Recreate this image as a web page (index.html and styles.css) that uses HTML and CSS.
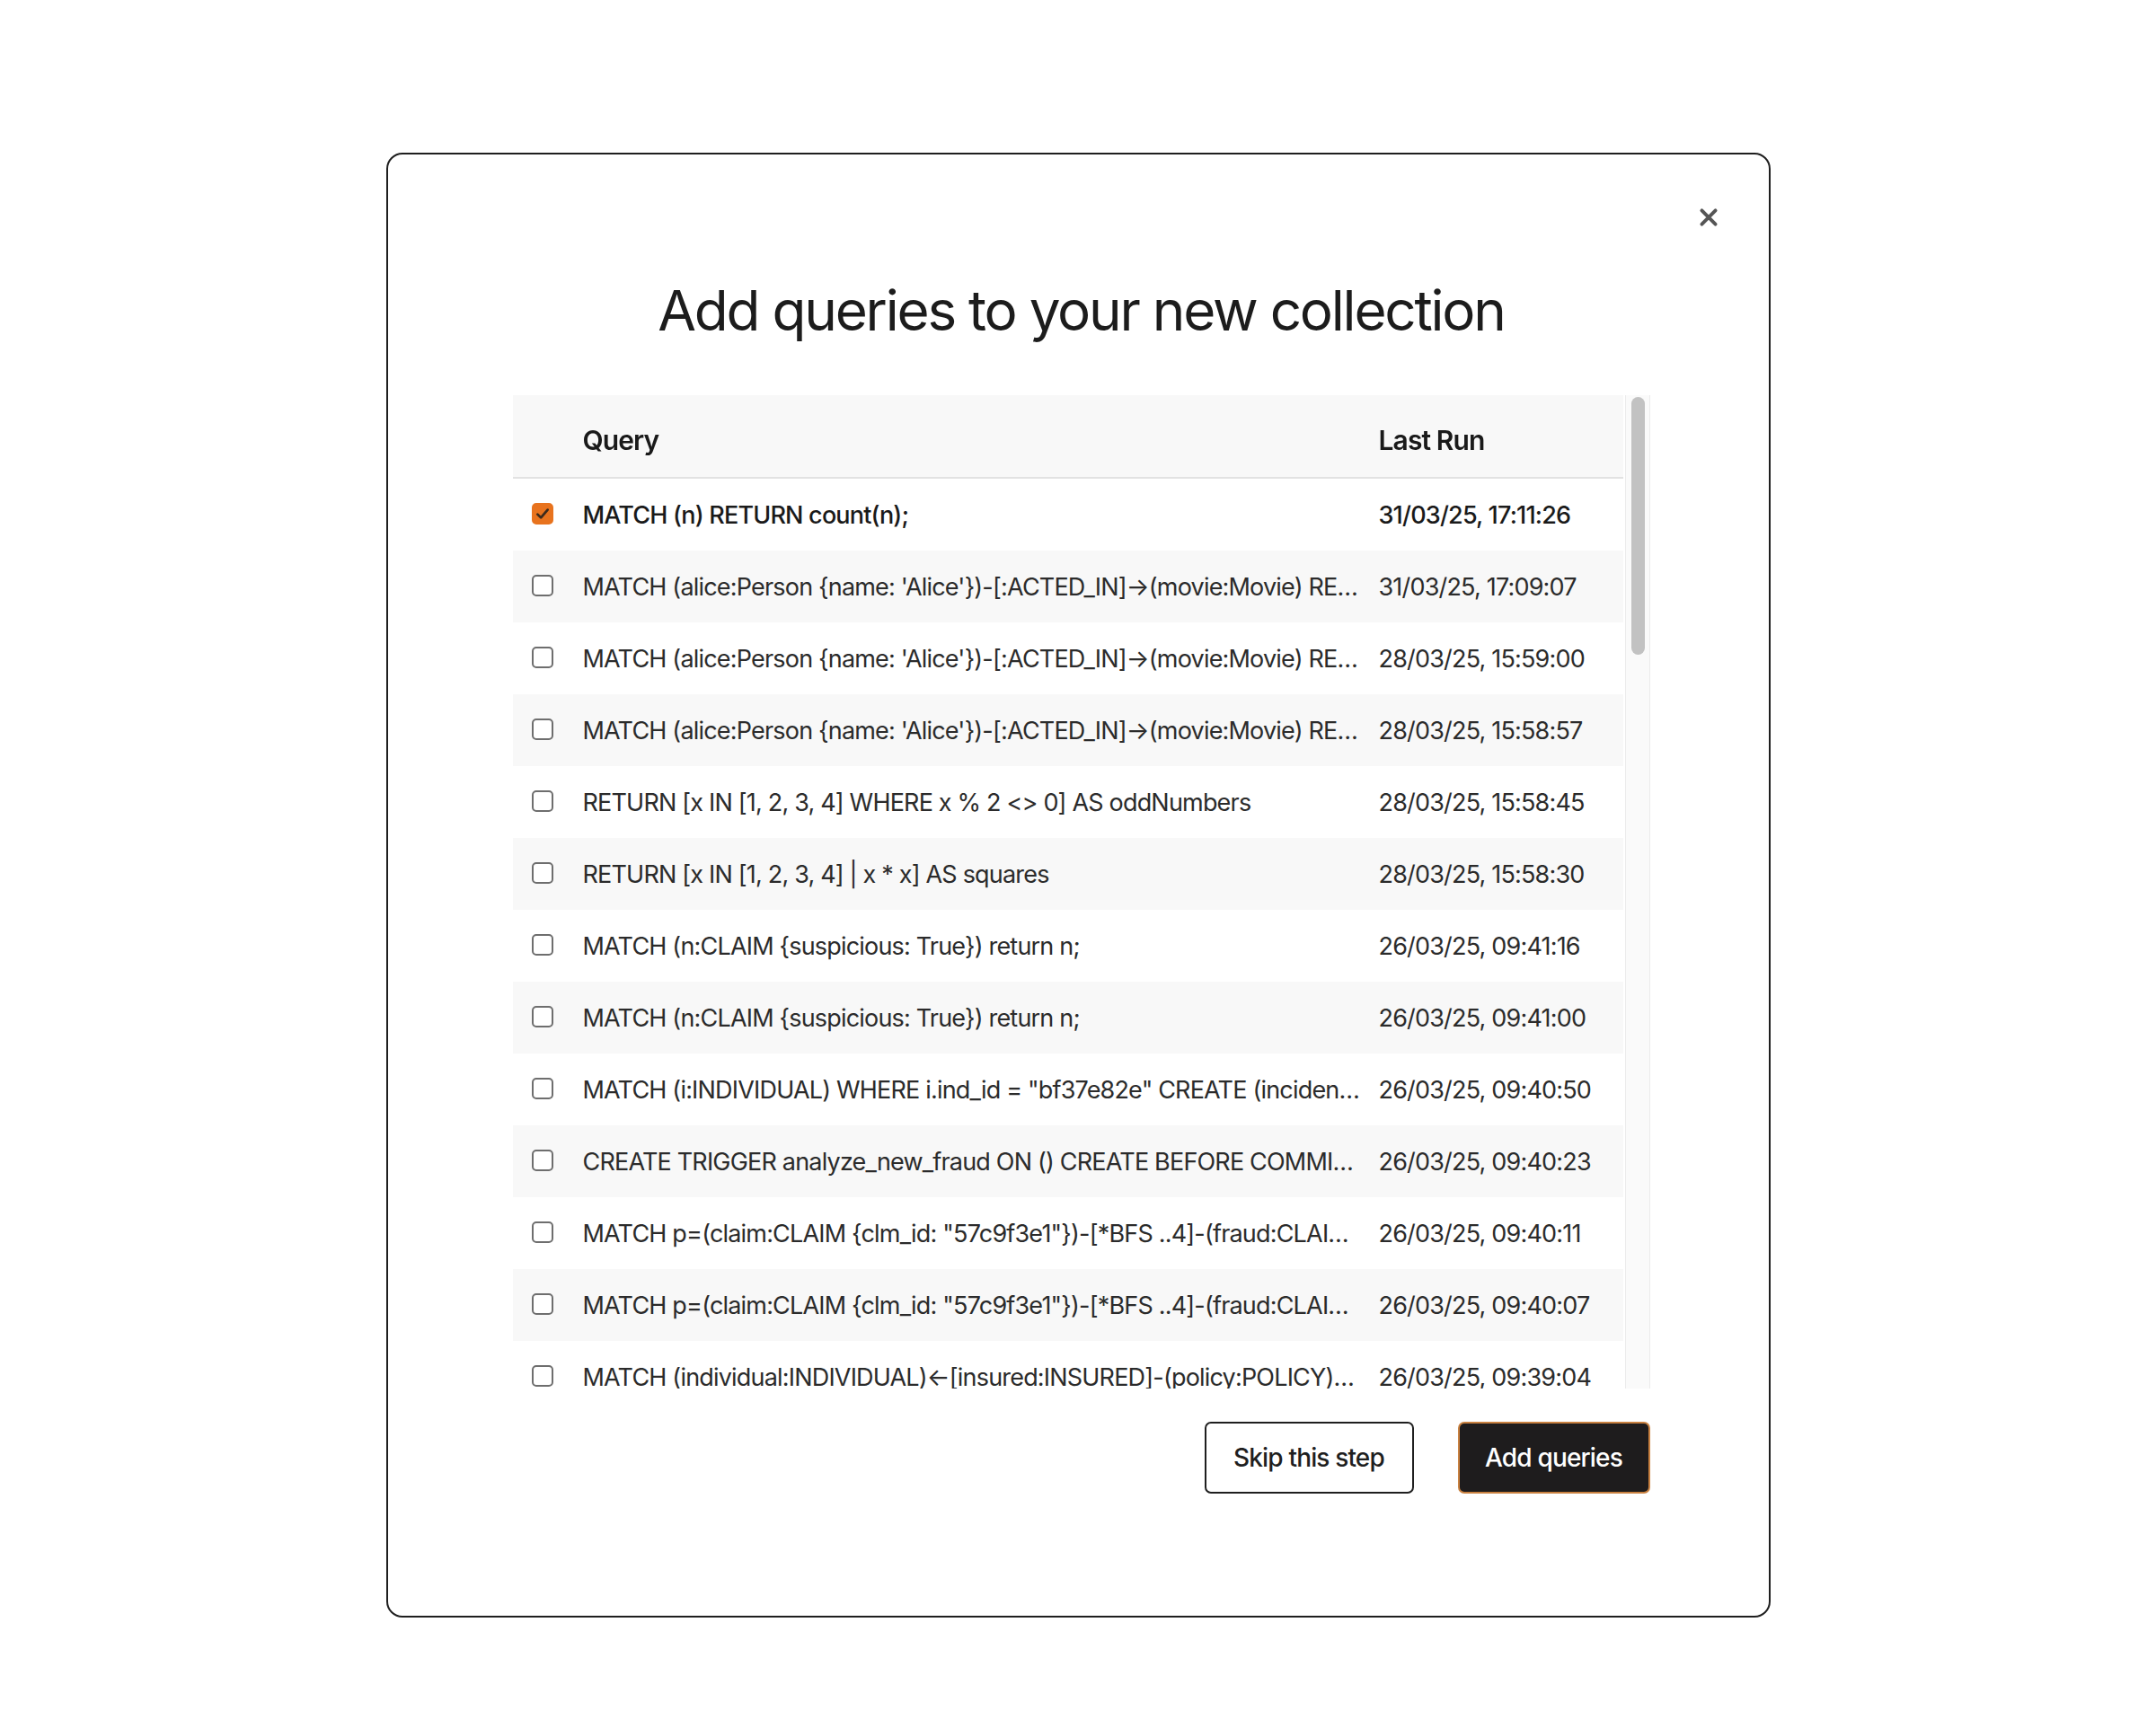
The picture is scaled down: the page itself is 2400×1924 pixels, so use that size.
FILE: index.html
```html
<!DOCTYPE html>
<html lang="en">
<head>
    <meta charset="UTF-8">
    <meta name="viewport" content="width=device-width, initial-scale=1.0">
    <title>Add queries to your new collection</title>
    <link rel="stylesheet" href="styles.css">
</head>
<body>
    <div class="modal">
        <button class="close-btn" type="button" aria-label="Close">
            <svg viewBox="0 0 24 24" width="26" height="26">
                <path d="M5 5 L19 19 M19 5 L5 19" stroke="#555" stroke-width="3.6" stroke-linecap="round" fill="none"/>
            </svg>
        </button>

        <h1 class="modal-title">Add queries to your new collection</h1>

        <div class="table-area">
            <div class="table-wrap" id="table-wrap">
                <table class="query-table">
                    <colgroup>
                        <col class="col-check">
                        <col class="col-query">
                        <col class="col-date">
                    </colgroup>
                    <thead>
                        <tr>
                            <th></th>
                            <th>Query</th>
                            <th>Last Run</th>
                        </tr>
                    </thead>
                    <tbody id="query-rows">
                        <tr class="selected">
                            <td><span class="check"><svg viewBox="0 0 16 16"><path d="M3.5 8.5 L6.5 11.5 L12.5 4.5" stroke="#3b2a1c" stroke-width="2.2" fill="none" stroke-linecap="round" stroke-linejoin="round"/></svg></span></td>
                            <td class="query">MATCH (n) RETURN count(n);</td>
                            <td class="date">31/03/25, 17:11:26</td>
                        </tr>
                        <tr>
                            <td><span class="check"></span></td>
                            <td class="query">MATCH (alice:Person {name: 'Alice'})-[:ACTED_IN]→(movie:Movie) RETURN movie.title;</td>
                            <td class="date">31/03/25, 17:09:07</td>
                        </tr>
                        <tr>
                            <td><span class="check"></span></td>
                            <td class="query">MATCH (alice:Person {name: 'Alice'})-[:ACTED_IN]→(movie:Movie) RETURN movie;</td>
                            <td class="date">28/03/25, 15:59:00</td>
                        </tr>
                        <tr>
                            <td><span class="check"></span></td>
                            <td class="query">MATCH (alice:Person {name: 'Alice'})-[:ACTED_IN]→(movie:Movie) RETURN alice, movie;</td>
                            <td class="date">28/03/25, 15:58:57</td>
                        </tr>
                        <tr>
                            <td><span class="check"></span></td>
                            <td class="query">RETURN [x IN [1, 2, 3, 4] WHERE x % 2 &lt;&gt; 0] AS oddNumbers</td>
                            <td class="date">28/03/25, 15:58:45</td>
                        </tr>
                        <tr>
                            <td><span class="check"></span></td>
                            <td class="query">RETURN [x IN [1, 2, 3, 4] | x * x] AS squares</td>
                            <td class="date">28/03/25, 15:58:30</td>
                        </tr>
                        <tr>
                            <td><span class="check"></span></td>
                            <td class="query">MATCH (n:CLAIM {suspicious: True}) return n;</td>
                            <td class="date">26/03/25, 09:41:16</td>
                        </tr>
                        <tr>
                            <td><span class="check"></span></td>
                            <td class="query">MATCH (n:CLAIM {suspicious: True}) return n;</td>
                            <td class="date">26/03/25, 09:41:00</td>
                        </tr>
                        <tr>
                            <td><span class="check"></span></td>
                            <td class="query">MATCH (i:INDIVIDUAL) WHERE i.ind_id = "bf37e82e" CREATE (incident:INCIDENT {inc_id: "9ad3e11b"})-[:INCIDENT_ON]→(i);</td>
                            <td class="date">26/03/25, 09:40:50</td>
                        </tr>
                        <tr>
                            <td><span class="check"></span></td>
                            <td class="query">CREATE TRIGGER analyze_new_fraud ON () CREATE BEFORE COMMIT EXECUTE CALL fraud.analyze();</td>
                            <td class="date">26/03/25, 09:40:23</td>
                        </tr>
                        <tr>
                            <td><span class="check"></span></td>
                            <td class="query">MATCH p=(claim:CLAIM {clm_id: "57c9f3e1"})-[*BFS ..4]-(fraud:CLAIM {fraud: True}) RETURN p;</td>
                            <td class="date">26/03/25, 09:40:11</td>
                        </tr>
                        <tr>
                            <td><span class="check"></span></td>
                            <td class="query">MATCH p=(claim:CLAIM {clm_id: "57c9f3e1"})-[*BFS ..4]-(fraud:CLAIM) RETURN p;</td>
                            <td class="date">26/03/25, 09:40:07</td>
                        </tr>
                        <tr>
                            <td><span class="check"></span></td>
                            <td class="query">MATCH (individual:INDIVIDUAL)←[insured:INSURED]-(policy:POLICY)←[:COVERS]-(claim:CLAIM) RETURN *;</td>
                            <td class="date">26/03/25, 09:39:04</td>
                        </tr>
                    </tbody>
                </table>
            </div>
            <div class="scroll-rail" id="scroll-rail">
                <div class="scroll-thumb" id="scroll-thumb"></div>
            </div>
        </div>

        <div class="actions">
            <button type="button" class="btn btn-outline">Skip this step</button>
            <button type="button" class="btn btn-primary">Add queries</button>
        </div>
    </div>

    <script>
        document.addEventListener('DOMContentLoaded', function() {
            const tbody = document.getElementById('query-rows');
            const wrap = document.getElementById('table-wrap');
            const rail = document.getElementById('scroll-rail');
            const thumb = document.getElementById('scroll-thumb');
            const checkSvg = '<svg viewBox="0 0 16 16"><path d="M3.5 8.5 L6.5 11.5 L12.5 4.5" stroke="#3b2a1c" stroke-width="2.2" fill="none" stroke-linecap="round" stroke-linejoin="round"/></svg>';

            // Older history entries (below the fold)
            const older = [
                'MATCH (n:CLAIM) RETURN n LIMIT 25;',
                'MATCH (p:POLICY)-[:HAS_CLAIM]→(c:CLAIM) RETURN p, c;',
                'MATCH (n) DETACH DELETE n;',
                'SHOW TRIGGERS;',
                'MATCH (i:INDIVIDUAL) RETURN count(i);'
            ];
            for (let i = 0; i < 39; i++) {
                const tr = document.createElement('tr');
                const min = String(38 - Math.floor(i / 2)).padStart(2, '0');
                const sec = String((i * 17) % 60).padStart(2, '0');
                tr.innerHTML = '<td><span class="check"></span></td>' +
                    '<td class="query"></td>' +
                    '<td class="date">25/03/25, 09:' + min + ':' + sec + '</td>';
                tr.querySelector('.query').textContent = older[i % older.length];
                tbody.appendChild(tr);
            }

            tbody.addEventListener('click', function(e) {
                const row = e.target.closest('tr');
                if (!row) return;
                row.classList.toggle('selected');
                row.querySelector('.check').innerHTML = row.classList.contains('selected') ? checkSvg : '';
            });

            // Custom scrollbar
            function updateThumb() {
                const track = rail.clientHeight - 4;
                const ratio = wrap.clientHeight / wrap.scrollHeight;
                thumb.style.height = (track * ratio) + 'px';
                thumb.style.transform = 'translateY(' + (wrap.scrollTop / wrap.scrollHeight * track) + 'px)';
            }
            wrap.addEventListener('scroll', updateThumb);
            updateThumb();
        });
    </script>
</body>
</html>
```

FILE: styles.css
```css
body {
    font-family: Inter, "Noto Sans", sans-serif;
    margin: 0;
    padding: 0;
    background-color: white;
    color: #1f1f1f;
}
.modal {
    position: relative;
    box-sizing: border-box;
    width: 1541px;
    height: 1631px;
    margin: 170px auto 0;
    padding: 135px 132px 0 139px;
    border: 2px solid #1f1f1f;
    border-radius: 18px;
    background-color: white;
}
.close-btn {
    position: absolute;
    top: 55px;
    right: 52px;
    width: 30px;
    height: 30px;
    padding: 0;
    border: none;
    background: none;
    cursor: pointer;
    display: flex;
    align-items: center;
    justify-content: center;
}
.modal-title {
    margin: 0 0 56px;
    font-size: 62px;
    line-height: 77px;
    font-weight: 400;
    letter-spacing: -0.036em;
    text-align: center;
    color: #1c1c1c;
}
.table-area {
    display: flex;
    gap: 2px;
    height: 1106px;
}
.table-wrap {
    flex: 1;
    overflow-y: auto;
    scrollbar-width: none;
}
.scroll-rail {
    box-sizing: border-box;
    width: 28px;
    padding: 2px 5px 2px 6px;
    background-color: #fafafa;
    border-left: 1px solid #ebebeb;
    border-right: 1px solid #ebebeb;
}
.scroll-thumb {
    background-color: #c2c2c2;
    border-radius: 8px;
}
.query-table {
    width: 100%;
    border-collapse: collapse;
    table-layout: fixed;
    font-size: 27px;
    letter-spacing: -0.03em;
}
.col-check {
    width: 78px;
}
.col-date {
    width: 272px;
}
.query-table th {
    position: sticky;
    top: 0;
    height: 83px;
    padding: 8px 0 0;
    text-align: left;
    font-size: 30px;
    font-weight: 600;
    letter-spacing: -0.03em;
    color: #1a1a1a;
    background-color: #f8f8f8;
    border-bottom: 2px solid #e2e2e2;
}
.query-table td {
    height: 80px;
    padding: 0;
    color: #2b2b2b;
    white-space: nowrap;
}
.query-table tbody tr:nth-child(even) td {
    background-color: #f8f8f8;
}
.query-table td.query {
    overflow: hidden;
    text-overflow: ellipsis;
    padding-right: 13px;
}
.query-table tr.selected td {
    font-weight: 500;
    color: #1a1a1a;
}
.check {
    display: block;
    box-sizing: border-box;
    width: 24px;
    height: 24px;
    margin-left: 21px;
    margin-top: -3px;
    border: 2px solid #6e6e6e;
    border-radius: 5px;
    background-color: white;
    cursor: pointer;
}
.check svg {
    display: block;
    width: 100%;
    height: 100%;
}
tr.selected .check {
    background-color: #e8731e;
    border-color: #e8731e;
}
.actions {
    display: flex;
    justify-content: flex-end;
    gap: 49px;
    margin-top: 37px;
}
.btn {
    height: 80px;
    box-sizing: border-box;
    border-radius: 7px;
    font-family: Inter, "Noto Sans", sans-serif;
    font-size: 28px;
    font-weight: 500;
    letter-spacing: -0.03em;
    cursor: pointer;
}
.btn-outline {
    width: 233px;
    background-color: white;
    color: #1f1f1f;
    border: 2px solid #1f1f1f;
}
.btn-primary {
    width: 214px;
    background-color: #1e1c1d;
    color: white;
    border: 2px solid #c98140;
}
```
